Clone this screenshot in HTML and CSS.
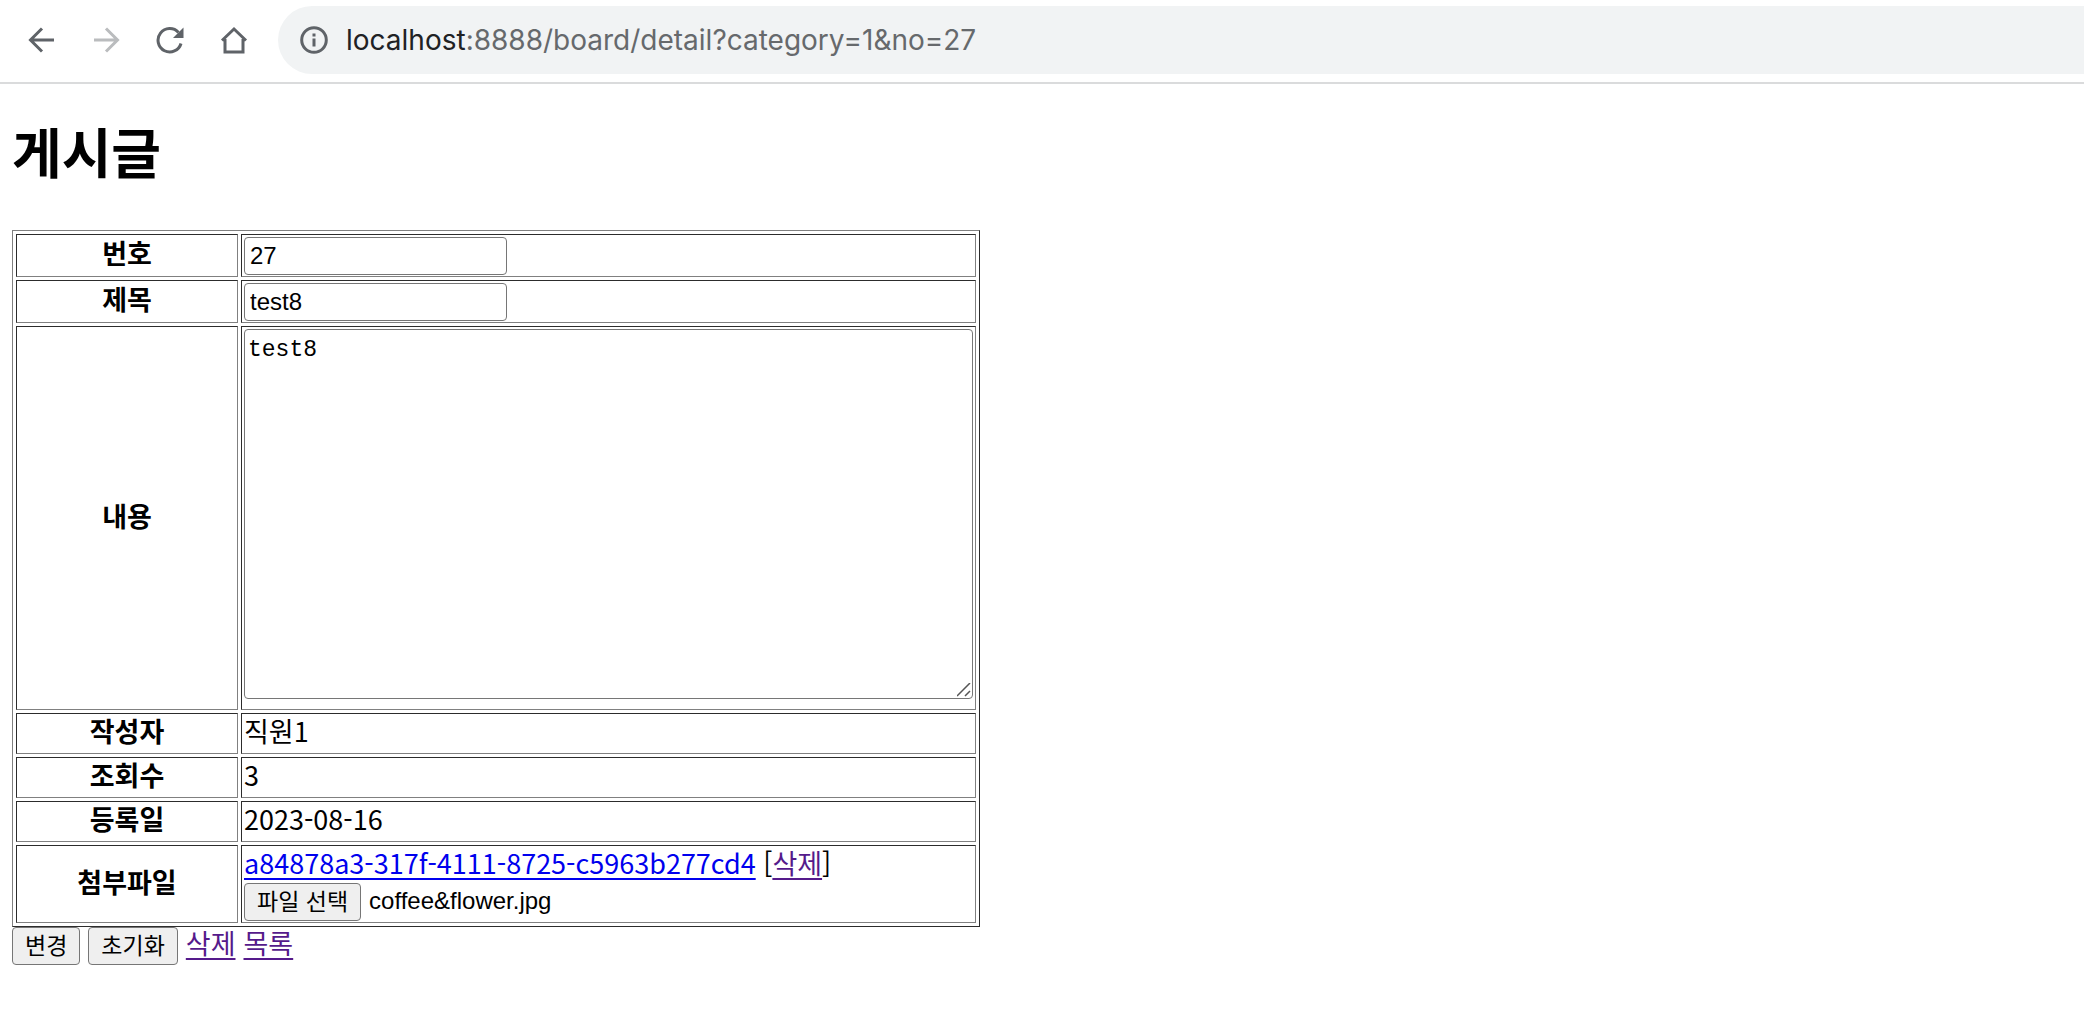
FILE: index.html
```html
<!DOCTYPE html>
<html lang="ko">
  <head>
    <meta charset="UTF-8" />
    <meta name="viewport" content="width=device-width, initial-scale=1.0" />
    <title>게시글</title>
    <link rel="stylesheet" href="styles.css">
  </head>
  <body>
    <header class="toolbar">
      <button class="nav-btn" type="button" aria-label="Back">
        <svg width="28" height="28" viewBox="0 0 28 28"><path d="M26 14H3M14 2.5L2.5 14L14 25.500" /></svg>
      </button>
      <button class="nav-btn disabled" type="button" aria-label="Forward">
        <svg width="28" height="28" viewBox="0 0 28 28"><path d="M2 14H25M14 2.5L25.500 14L14 25.500" /></svg>
      </button>
      <button class="nav-btn" type="button" aria-label="Reload">
        <svg width="28" height="28" viewBox="0 0 28 28">
          <path d="M25 17.500A11.700 11.700 0 1 1 22.500 6.500" />
          <path class="solid" d="M27.500 1.500V12H17Z" />
        </svg>
      </button>
      <button class="nav-btn" type="button" aria-label="Home">
        <svg width="28" height="28" viewBox="0 0 28 28"><path d="M2 14.500L14 3L26 14.500M5 13V26H23V13" /></svg>
      </button>
      <div class="address">
        <svg class="info" width="28" height="28" viewBox="0 0 28 28">
          <circle cx="14" cy="14" r="12.300" />
          <path d="M14 12.500V20.500M14 7.500V10.500" />
        </svg>
        <span class="url"><span class="host">localhost</span>:8888/board/detail?category=1&amp;no=27</span>
      </div>
    </header>

    <main class="content">
      <h1 class="title">게시글</h1>

      <form>
        <table class="board">
          <tr>
            <th><label for="no">번호</label></th>
            <td class="field"><input class="text-input" type="text" id="no" name="no" value="27" readonly /></td>
          </tr>
          <tr>
            <th><label for="title">제목</label></th>
            <td class="field"><input class="text-input" type="text" id="title" name="title" value="test8" /></td>
          </tr>
          <tr>
            <th><label for="content">내용</label></th>
            <td class="field"><textarea class="text-area" id="content" name="content">test8</textarea></td>
          </tr>
          <tr>
            <th>작성자</th>
            <td>직원1</td>
          </tr>
          <tr>
            <th>조회수</th>
            <td>3</td>
          </tr>
          <tr>
            <th>등록일</th>
            <td>2023-08-16</td>
          </tr>
          <tr>
            <th>첨부파일</th>
            <td class="field">
              <div class="attached">
                <a class="file-link" href="#file">a84878a3-317f-4111-8725-c5963b277cd4</a>
                [<a href="#delete-file">삭제</a>]
              </div>
              <div class="file-row">
                <input class="file-input" type="file" id="files" name="files" />
                <label class="btn" for="files">파일 선택</label>
                <span class="file-name">coffee&amp;flower.jpg</span>
              </div>
            </td>
          </tr>
        </table>

        <div class="actions">
          <button class="btn" type="submit">변경</button>
          <button class="btn" type="reset">초기화</button>
          <a href="#delete">삭제</a>
          <a href="#list">목록</a>
        </div>
      </form>
    </main>
  </body>
</html>
```
FILE: styles.css
```css
* {
  box-sizing: border-box;
}

body {
  margin: 0;
  background: #fff;
  color: #000;
  font-family: "Noto Sans CJK KR", sans-serif;
  font-size: 27px;
  line-height: 31px;
}

/* browser bar */
.toolbar {
  display: flex;
  align-items: center;
  height: 84px;
  padding: 0 0 2px 10px;
  border-bottom: 2px solid #dadbdc;
}

.nav-btn {
  display: flex;
  justify-content: center;
  width: 64px;
  padding: 0;
  border: none;
  background: none;
}

.nav-btn svg,
.info {
  fill: none;
  stroke: #5f6368;
  stroke-width: 3;
}

.nav-btn.disabled svg {
  stroke: #babcbe;
}

.nav-btn .solid {
  fill: #5f6368;
  stroke: none;
}

.address {
  display: flex;
  align-items: center;
  flex: 1;
  gap: 18px;
  height: 68px;
  margin-left: 12px;
  padding-left: 22px;
  border-radius: 34px 0 0 34px;
  background: #f1f3f4;
}

.url {
  color: #66696c;
  font-family: Inter, sans-serif;
  font-size: 28px;
}

.host {
  color: #202124;
}

/* post detail */
.content {
  padding: 0 12px;
}

.title {
  margin: 30px 0 42px;
  font-size: 54px;
  line-height: 74px;
}

.board {
  width: 968px;
  border: 1px solid;
  border-color: #808080 #2c2c2c #2c2c2c #808080;
  border-spacing: 3px;
}

.board th,
.board td {
  padding: 1px 2px 7px;
  border: 1px solid;
  border-color: #2c2c2c #808080 #808080 #2c2c2c;
}

.board th {
  width: 222px;
}

.board .field {
  padding: 1px 2px;
}

.text-input,
.text-area {
  display: block;
  border: 1px solid #767676;
  border-radius: 4px;
  background: #fff;
  color: #000;
}

.text-input {
  width: 263px;
  height: 38px;
  margin: 1px 0 0;
  padding: 2px 5px;
  font-family: "Liberation Sans", sans-serif;
  font-size: 24px;
}

.text-area {
  width: 100%;
  height: 370px;
  margin: 1px 0 9px;
  padding: 4px 3px;
  font-family: "Liberation Mono", monospace;
  font-size: 23px;
  line-height: 32px;
  resize: both;
}

.text-area::-webkit-resizer {
  background: url("data:image/svg+xml,%3Csvg xmlns='http://www.w3.org/2000/svg' width='15' height='15'%3E%3Cpath d='M0 13L13 0M8 13L13 8' stroke='%23555' stroke-width='1.500'/%3E%3C/svg%3E") right bottom no-repeat;
}

a {
  color: #551a8b;
  text-decoration-thickness: 2px;
  text-underline-offset: 4px;
}

.file-link {
  color: #0000ee;
}

.attached {
  margin-bottom: 5px;
}

.file-row,
.actions {
  display: flex;
  gap: 8px;
}

.file-input {
  position: absolute;
  width: 1px;
  height: 1px;
  opacity: 0;
}

.file-name {
  font-family: "Liberation Sans", sans-serif;
  font-size: 24px;
  line-height: 36px;
}

.btn {
  height: 38px;
  padding: 0 12px 4px;
  border: 1px solid #767676;
  border-radius: 4px;
  background: #efefef;
  color: #000;
  font-family: "Noto Sans CJK KR", sans-serif;
  font-size: 23px;
  line-height: 32px;
}
```
